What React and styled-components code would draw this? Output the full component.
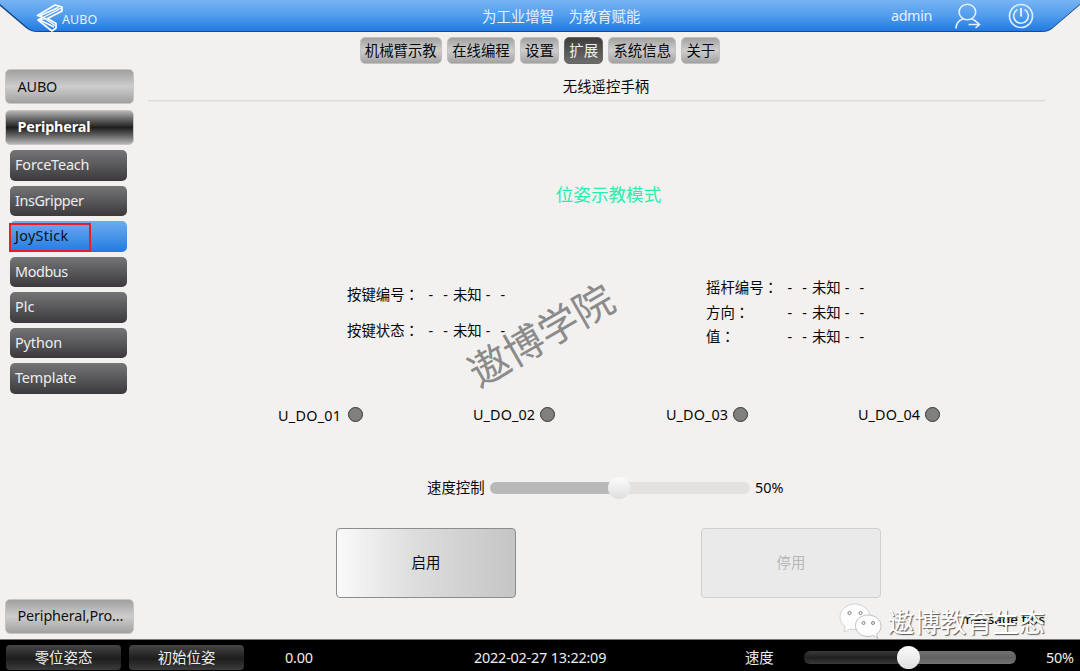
import React from 'react';
import styled, { createGlobalStyle } from 'styled-components';

const GlobalStyle = createGlobalStyle`
  * {
    box-sizing: border-box;
  }

  body {
    margin: 0;
    background: #f2f1f0;
    color: #080808;
    font-family: "Noto Sans", "Noto Sans CJK SC", sans-serif;
    font-size: 14.4px;
    line-height: 20px;
    overflow: hidden;
  }

  button {
    margin: 0;
    padding: 0;
    border: 0;
    font: inherit;
    color: inherit;
    white-space: nowrap;
  }
`;

const Page = styled.div`
  position: relative;
  display: flex;
  flex-direction: column;
  width: 1080px;
  height: 671px;
  overflow: hidden;
`;

const Header = styled.header`
  position: relative;
  display: flex;
  align-items: center;
  height: 32px;
  flex: none;
  color: #e4f0ff;
  isolation: isolate;

  &::before,
  &::after {
    content: "";
    position: absolute;
    inset: 0;
    z-index: -2;
    background: #174a87;
    clip-path: path("M0 0H1080V5L1053 28Q1049 32 1042 32H37Q31 32 26 28L0 6Z");
  }

  &::after {
    z-index: -1;
    background: linear-gradient(#77b3f2, #529ded 48%, #1d78e2);
    clip-path: path("M0 0H1080V4L1053 27Q1049 31 1042 31H37Q31 31 27 27L0 4Z");
  }
`;

const Brand = styled.div`
  display: flex;
  align-items: flex-start;
  width: 480px;
  padding-left: 36px;
  height: 30px;

  svg {
    margin-top: 1px;
  }
`;

const BrandName = styled.span`
  margin: 9px 0 0 -2px;
  font-size: 12.5px;
  letter-spacing: 0.1px;
`;

const Slogan = styled.div`
  width: 411px;
  padding: 2px 0 0 2px;
  white-space: pre;
`;

const HeaderTools = styled.div`
  display: flex;
  align-items: center;

  span {
    width: 63px;
    letter-spacing: -0.4px;
  }

  svg + svg {
    margin-left: 27px;
  }
`;

const Tabs = styled.nav`
  display: flex;
  justify-content: center;
  gap: 5.4px;
  padding: 5px 0 0;
  height: 37px;
  flex: none;
`;

const Tab = styled.button`
  height: 27px;
  padding: 0 4px;
  border: 1px solid ${({ $active }) => ($active ? '#666' : '#c1c1c1')};
  border-radius: 5px;
  color: ${({ $active }) => ($active ? '#eee' : '#080808')};
  background: ${({ $active }) => ($active
    ? 'linear-gradient(#3e3e3e, #6c6c6c)'
    : 'linear-gradient(#a2a2a2, #cdcdcd 50%, #a2a2a2)')};
`;

const Body = styled.div`
  display: flex;
  height: 570px;
  flex: none;
`;

const Sidebar = styled.aside`
  display: flex;
  flex-direction: column;
  width: 148px;
  padding: 0 13.6px 0 5px;
`;

const GroupButton = styled.button`
  height: 35px;
  flex: none;
  margin-bottom: 5.5px;
  padding-left: 11.5px;
  border: 1px solid #c6c6c6;
  border-radius: 5px;
  text-align: left;
  letter-spacing: -0.15px;
  font-weight: ${({ $open }) => ($open ? 700 : 400)};
  color: ${({ $open }) => ($open ? '#fff' : '#111')};
  background: ${({ $open }) => ($open
    ? 'linear-gradient(#b5b5b5, #686868 24%, #1e1e1e 50%, #686868 76%, #b5b5b5)'
    : 'linear-gradient(#a0a0a0, #cdcdcd 50%, #a0a0a0)')};
`;

const PluginList = styled.div`
  display: flex;
  flex-direction: column;
  gap: 5px;
  flex: 1;
  padding: 0 7.4px 0 5px;
`;

const PluginButton = styled.button`
  position: relative;
  height: 30.5px;
  padding-left: 5px;
  border-radius: 5px;
  text-align: left;
  letter-spacing: ${({ $tracking }) => $tracking}px;
  color: ${({ $active }) => ($active ? '#111' : '#eee')};
  background: ${({ $active }) => ($active
    ? 'linear-gradient(#6eacee, #227be2)'
    : 'linear-gradient(#757577, #3b393c)')};
`;

const Highlight = styled.i`
  position: absolute;
  left: -1px;
  top: 2px;
  width: 82px;
  height: 29px;
  border: 2px solid #ed1c24;
`;

const Main = styled.main`
  display: flex;
  flex-direction: column;
  width: 897px;

  > * {
    flex: none;
  }
`;

const Title = styled.h1`
  height: 32px;
  margin: 0;
  padding: 8px 0 0 19px;
  border-bottom: 1px solid #dcdbda;
  box-shadow: 0 1px #e9e8e7;
  font-size: 14.4px;
  font-weight: 400;
  text-align: center;
`;

const ModeLabel = styled.div`
  height: 174px;
  padding: 83px 0 0 24px;
  text-align: center;
  font-size: 17.6px;
  color: #28edae;
`;

const StatusPanels = styled.div`
  display: flex;
  height: 130px;
  padding-left: 199px;
`;

const StatusTable = styled.dl`
  display: grid;
  grid-template-columns: 81.5px auto;
  grid-auto-rows: ${({ $pitch }) => $pitch}px;
  align-content: start;
  flex: none;
  width: 359px;
  margin: 0;
  padding-top: ${({ $top }) => $top}px;
  white-space: pre;

  dd {
    margin: 0;
  }
`;

const Colon = styled.span`
  font-family: "Noto Sans CJK TC", sans-serif;
  line-height: 1;
`;

const Dashes = styled.span`
  margin: ${({ $after }) => ($after ? '0 0 0 4px' : '0 5px 0 0')};
  word-spacing: 6.4px;
`;

const Outputs = styled.div`
  display: flex;
  height: 71px;
  padding-left: 130px;
`;

const Output = styled.div`
  display: flex;
  width: ${({ $width }) => $width}px;
  letter-spacing: ${({ $first }) => ($first ? 0.25 : 0.1)}px;

  span {
    width: ${({ $label }) => $label}px;
    padding-top: ${({ $first }) => ($first ? 1 : 0)}px;
  }
`;

const Lamp = styled.i`
  width: 15px;
  height: 15px;
  margin-top: 2px;
  border: 1px solid #333;
  border-radius: 50%;
  background: #808080;
`;

const SpeedRow = styled.div`
  display: flex;
  align-items: center;
  height: 24px;
  padding-left: 279px;

  span:first-child {
    width: 63px;
  }

  span:last-child {
    margin-left: 5px;
  }
`;

const Track = styled.div`
  display: flex;
  align-items: center;
  justify-content: center;
  flex: none;
  width: ${({ $width }) => $width}px;
  height: ${({ $dark }) => ($dark ? 13 : 12)}px;
  border-radius: 6px;
  background: ${({ $dark }) => ($dark
    ? 'linear-gradient(90deg, transparent 50%, rgba(255, 255, 255, 0.29) 50%), linear-gradient(#3a3a3a, #202020 50%, #3a3a3a)'
    : 'linear-gradient(90deg, #b9b9b9 50%, #e3e2e1 50%)')};
`;

const Thumb = styled.i`
  width: ${({ $size }) => $size}px;
  height: ${({ $size }) => $size}px;
  flex: none;
  margin-right: 3px;
  border-radius: 50%;
  background: linear-gradient(#fcfcfc, #dedede);
`;

const Actions = styled.div`
  display: flex;
  gap: 185px;
  padding: 28px 0 0 188px;
`;

const ActionButton = styled.button`
  width: 180px;
  height: 70px;
  border: 1px solid #8c8c8c;
  border-radius: 4px;
  background: linear-gradient(90deg, #fafafa, #dedede 42%, #c5c5c5);

  &:disabled {
    border-color: #cfcfcf;
    color: #b8b8b8;
    background: #eaeaea;
  }
`;

const Tips = styled.div`
  margin-top: 11px;
  text-align: right;
  font-size: 13.4px;
  font-weight: 500;
`;

const Footer = styled.footer`
  display: flex;
  align-items: center;
  flex: 1;
  padding: 4px 0 0 6px;
  border-top: 1px solid #777;
  color: #eee;
  background: #000;
`;

const PoseButton = styled.button`
  width: 115px;
  height: 25px;
  margin-right: 8px;
  border-radius: 4px;
  background: linear-gradient(#454545, #1d1d1d 55%, #3c3c3c);
`;

const FooterText = styled.span`
  flex: none;
  width: ${({ $width }) => $width}px;
  margin-left: ${({ $left }) => $left || 0}px;
  letter-spacing: -0.2px;
`;

const Stamp = styled.div`
  position: absolute;
  left: 456px;
  top: 312px;
  width: 170px;
  font-size: 40px;
  line-height: 46px;
  text-align: center;
  color: #8b8b8b;
  transform: rotate(-30deg);
`;

const Signature = styled.div`
  position: absolute;
  left: 839px;
  top: 602px;
  display: flex;
  align-items: center;
  color: #fff;
  font-size: 26.2px;
  line-height: 40px;
  white-space: nowrap;
  text-shadow: 1px 1px 1px #555;

  svg {
    margin-right: 6px;
  }
`;

function Logo() {
  return (
    <svg width="28" height="30" viewBox="0 0 28 30" fill="none" stroke="#fff" strokeWidth="1.7" strokeLinejoin="round">
      <path d="M1.500 13.500 19 3l7 2v4L11.500 16.500 20 21.500V26l-4 3L2 18l5-2.500Z" />
      <path d="m3.500 14 19-8.500M7 15.500 25.500 6M2.500 17.500l8-1M4 18l14 7M8 16l11 7.500" strokeWidth="1.400" />
    </svg>
  );
}

function UserIcon() {
  return (
    <svg width="27" height="28" viewBox="0 0 27 28" fill="none" stroke="#e4f0ff" strokeWidth="1.6">
      <ellipse cx="13.4" cy="10" rx="8.3" ry="7.8" />
      <path d="M2 26.5C2 22 4.5 18.5 9 17M18 17q3.5 1.3 5 3.5M14.5 22.5H25M21.5 19l4 3.5-4 3.5" />
    </svg>
  );
}

function PowerIcon() {
  return (
    <svg width="26" height="26" viewBox="0 0 26 26" fill="none" stroke="#dcecff" strokeWidth="1.7">
      <circle cx="13" cy="13" r="11.5" />
      <path d="M9.4 6.6a7.3 7.3 0 1 0 7.2 0" />
      <path d="M13 5v8.5" strokeWidth="2" />
    </svg>
  );
}

function ChatIcon() {
  return (
    <svg width="43" height="40" viewBox="0 0 43 40" fill="#fdfdfd" stroke="#bbb" strokeWidth="0.6">
      <path d="M16 2C8 2 1 7.5 1 15c0 4 2 7.300 5.200 9.800L5 30l6-3c7 2 20-1 20-12C31 8 24 2 16 2Z" />
      <path d="M29 13c-7 0-12.500 4.700-12.500 10.700S22 34.500 29 34.500c1.800 0 3.500-.4 5-1l5 3-1.500-4.200C40.500 30 42 27.500 42 24c0-6.300-6-11-13-11Z" stroke="#999" />
      <g fill="#eee" stroke="#888" strokeWidth="1">
        <circle cx="10.500" cy="11" r="1.600" />
        <circle cx="21.500" cy="11" r="1.600" />
        <circle cx="24.500" cy="21" r="1.500" />
        <circle cx="34" cy="21" r="1.500" />
      </g>
    </svg>
  );
}

function StatusRow({ label }) {
  return (
    <>
      <dt>{label}<Colon lang="zh-TW">：</Colon></dt>
      <dd><Dashes>- -</Dashes>未知<Dashes $after>- -</Dashes></dd>
    </>
  );
}

const tabs = ['机械臂示教', '在线编程', '设置', '扩展', '系统信息', '关于'];

const plugins = [
  { name: 'ForceTeach', tracking: -0.15 },
  { name: 'InsGripper', tracking: -0.4 },
  { name: 'JoyStick', tracking: 0.3 },
  { name: 'Modbus', tracking: -0.4 },
  { name: 'Plc', tracking: 0.1 },
  { name: 'Python', tracking: -0.1 },
  { name: 'Template', tracking: -0.15 },
];

const outputs = [
  { name: 'U_DO_01', width: 195, label: 70 },
  { name: 'U_DO_02', width: 193, label: 67 },
  { name: 'U_DO_03', width: 192, label: 67 },
  { name: 'U_DO_04', width: 90, label: 67 },
];

function App() {
  return (
    <Page>
      <GlobalStyle />
      <Header>
        <Brand>
          <Logo />
          <BrandName>AUBO</BrandName>
        </Brand>
        <Slogan>为工业增智{'\u3000'}为教育赋能</Slogan>
        <HeaderTools>
          <span>admin</span>
          <UserIcon />
          <PowerIcon />
        </HeaderTools>
      </Header>
      <Tabs>
        {tabs.map((tab) => (
          <Tab key={tab} $active={tab === '扩展'}>{tab}</Tab>
        ))}
      </Tabs>
      <Body>
        <Sidebar>
          <GroupButton>AUBO</GroupButton>
          <GroupButton $open>Peripheral</GroupButton>
          <PluginList>
            {plugins.map(({ name, tracking }) => (
              <PluginButton key={name} $active={name === 'JoyStick'} $tracking={tracking}>
                {name}
                {name === 'JoyStick' && <Highlight />}
              </PluginButton>
            ))}
          </PluginList>
          <GroupButton>Peripheral,Pro…</GroupButton>
        </Sidebar>
        <Main>
          <Title>无线遥控手柄</Title>
          <ModeLabel>位姿示教模式</ModeLabel>
          <StatusPanels>
            <StatusTable $pitch={36} $top={10}>
              <StatusRow label="按键编号" />
              <StatusRow label="按键状态" />
            </StatusTable>
            <StatusTable $pitch={24.5} $top={3}>
              <StatusRow label="摇杆编号" />
              <StatusRow label="方向" />
              <StatusRow label="值" />
            </StatusTable>
          </StatusPanels>
          <Outputs>
            {outputs.map(({ name, width, label }, i) => (
              <Output key={name} $width={width} $label={label} $first={i === 0}>
                <span>{name}</span>
                <Lamp />
              </Output>
            ))}
          </Outputs>
          <SpeedRow>
            <span>速度控制</span>
            <Track $width={260}><Thumb $size={22} /></Track>
            <span>50%</span>
          </SpeedRow>
          <Actions>
            <ActionButton>启用</ActionButton>
            <ActionButton disabled>停用</ActionButton>
          </Actions>
          <Tips>message tips</Tips>
        </Main>
      </Body>
      <Footer>
        <PoseButton>零位姿态</PoseButton>
        <PoseButton>初始位姿</PoseButton>
        <FooterText $width={189} $left={33}>0.00</FooterText>
        <FooterText $width={271}>2022-02-27 13:22:09</FooterText>
        <FooterText $width={59}>速度</FooterText>
        <Track $dark $width={212}><Thumb $size={23} /></Track>
        <FooterText $width={33} $left={30}>50%</FooterText>
      </Footer>
      <Stamp>遨博学院</Stamp>
      <Signature>
        <ChatIcon />
        遨博教育生态
      </Signature>
    </Page>
  );
}

export default App;
